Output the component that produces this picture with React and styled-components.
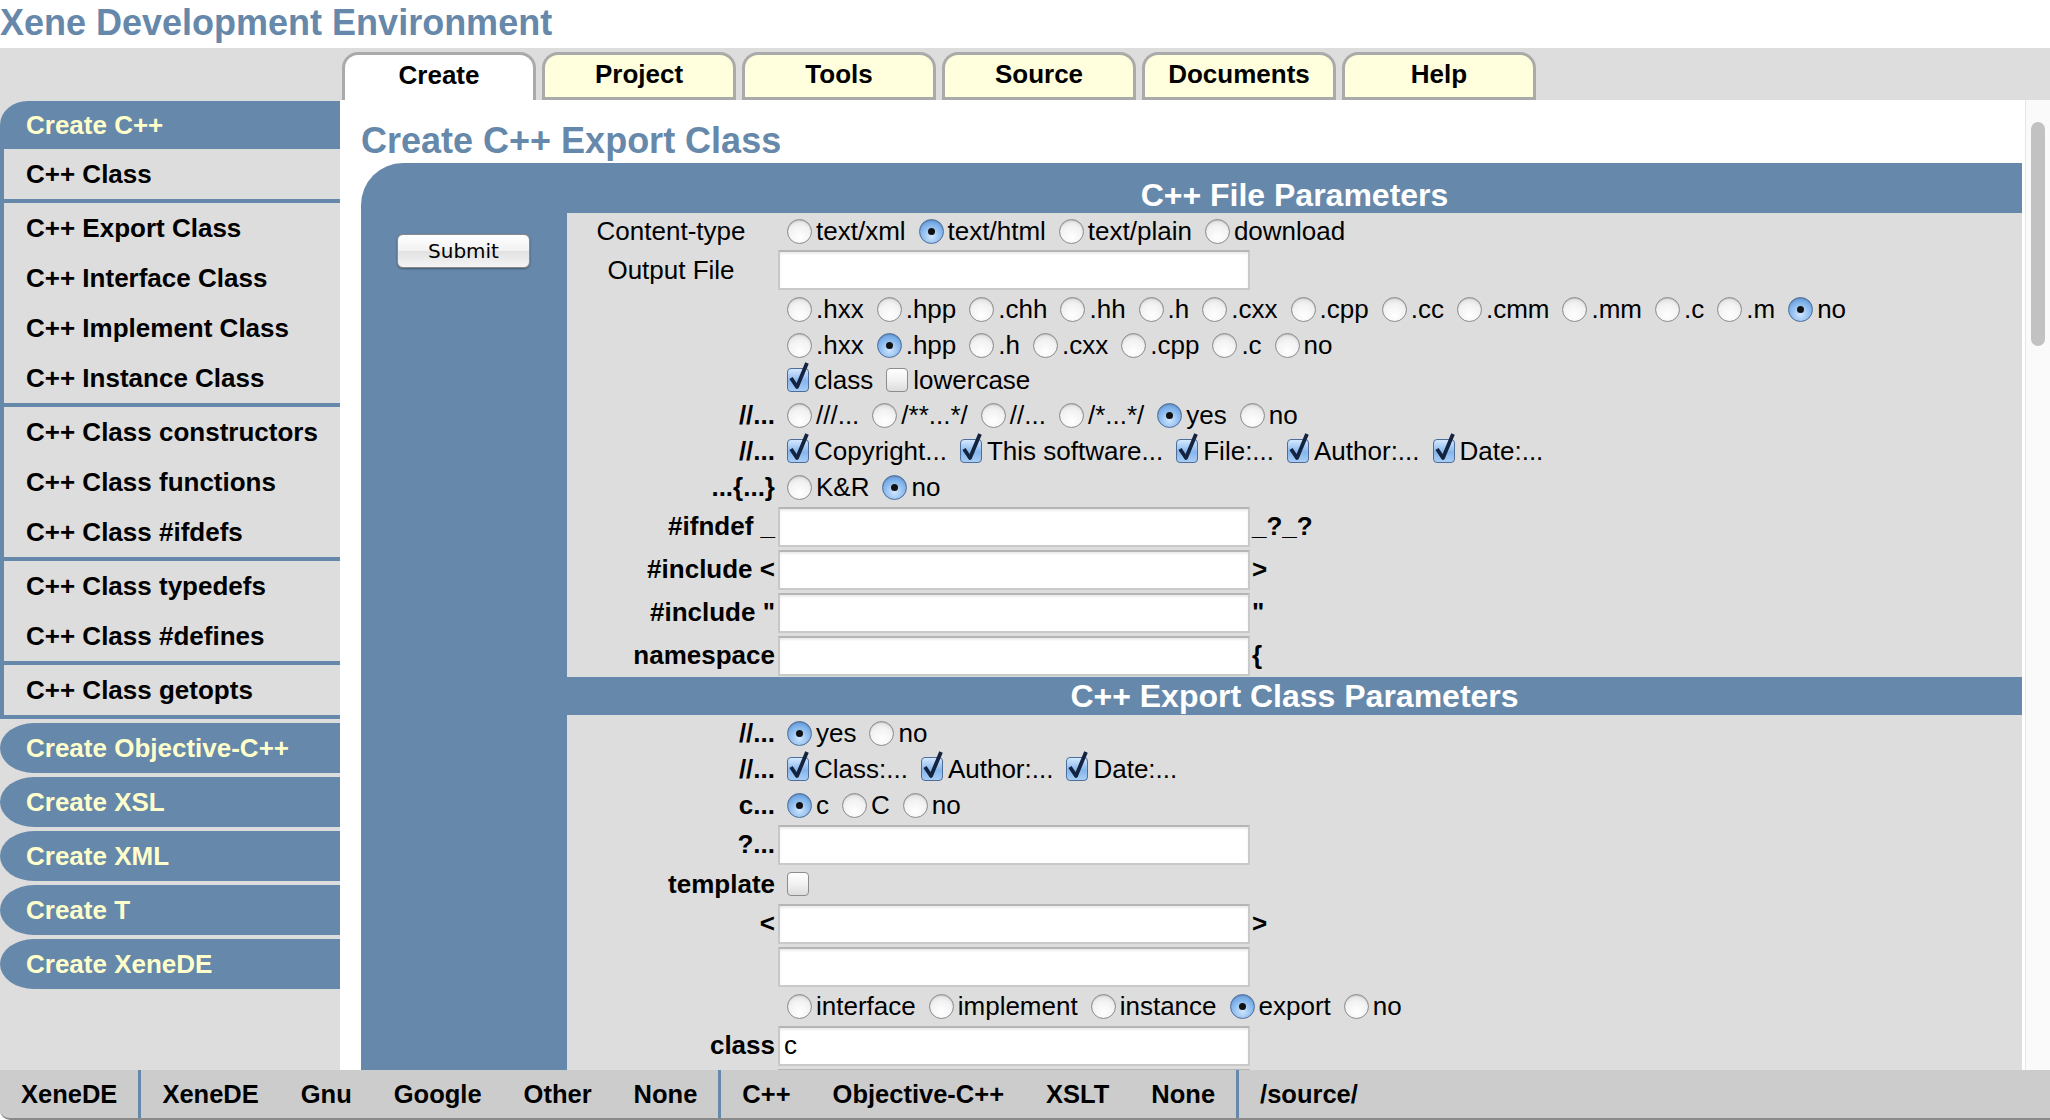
import styled, { createGlobalStyle } from "styled-components";

const BLUE = "#6688aa";

const GlobalStyle = createGlobalStyle`
  * { box-sizing: border-box; }
  body {
    margin: 0;
    background: #fff;
    font-family: "Liberation Sans", Arial, sans-serif;
    color: #000;
  }
`;

const tabs = ["Create", "Project", "Tools", "Source", "Documents", "Help"];

const groups = [
  ["C++ Class"],
  ["C++ Export Class", "C++ Interface Class", "C++ Implement Class", "C++ Instance Class"],
  ["C++ Class constructors", "C++ Class functions", "C++ Class #ifdefs"],
  ["C++ Class typedefs", "C++ Class #defines"],
  ["C++ Class getopts"],
];

const moreCreate = [
  "Create Objective-C++",
  "Create XSL",
  "Create XML",
  "Create T",
  "Create XeneDE",
];

const footer = [
  ["XeneDE"],
  ["XeneDE", "Gnu", "Google", "Other", "None"],
  ["C++", "Objective-C++", "XSLT", "None"],
  ["/source/"],
];

const Radio = ({ on }) => <RadioDot $on={on} />;

const Check = ({ on }) => (
  <CheckBox $on={on}>
    {on && (
      <svg width="24" height="30" viewBox="0 0 24 30">
        <path
          d="M4 17 L10 26 L20 2"
          fill="none"
          stroke="#14233f"
          strokeWidth="3.8"
          strokeLinejoin="round"
        />
      </svg>
    )}
  </CheckBox>
);

const Options = ({ items, type = "radio" }) =>
  items.map(([text, on], i) => (
    <Option key={i} $check={type !== "radio"}>
      {type === "radio" ? <Radio on={on} /> : <Check on={on} />}
      {text && <span>{text}</span>}
    </Option>
  ));

const App = () => {
  return (
    <Page>
      <GlobalStyle />
      <Title>Xene Development Environment</Title>
      <TabBar>
        {tabs.map((t, i) => (
          <Tab key={t} $active={i === 0}>
            {t}
          </Tab>
        ))}
      </TabBar>
      <Body>
        <Sidebar>
          <SideHead>Create C++</SideHead>
          {groups.map((g, i) => (
            <Group key={i}>
              {g.map((item) => (
                <SideItem key={item}>{item}</SideItem>
              ))}
            </Group>
          ))}
          {moreCreate.map((c) => (
            <SideHead key={c} $pill>
              {c}
            </SideHead>
          ))}
        </Sidebar>
        <Content>
          <Main>
            <Heading>Create C++ Export Class</Heading>
            <Panel>
              <SubmitCol>
                <SubmitButton>Submit</SubmitButton>
              </SubmitCol>
              <FormCol>
                <SectionHead $h={50} $top={14}>
                  C++ File Parameters
                </SectionHead>
                <Section>
                  <Row $h={36}>
                    <Label $plain>Content-type</Label>
                    <Value $pl={9}>
                      <Options
                        items={[
                          ["text/xml"],
                          ["text/html", true],
                          ["text/plain"],
                          ["download"],
                        ]}
                      />
                    </Value>
                  </Row>
                  <Row $h={42}>
                    <Label $plain>Output File</Label>
                    <Value>
                      <Field />
                    </Value>
                  </Row>
                  <Row $h={36}>
                    <Label />
                    <Value $pl={9}>
                      <Options
                        items={[
                          [".hxx"],
                          [".hpp"],
                          [".chh"],
                          [".hh"],
                          [".h"],
                          [".cxx"],
                          [".cpp"],
                          [".cc"],
                          [".cmm"],
                          [".mm"],
                          [".c"],
                          [".m"],
                          ["no", true],
                        ]}
                      />
                    </Value>
                  </Row>
                  <Row $h={36}>
                    <Label />
                    <Value $pl={9}>
                      <Options
                        items={[
                          [".hxx"],
                          [".hpp", true],
                          [".h"],
                          [".cxx"],
                          [".cpp"],
                          [".c"],
                          ["no"],
                        ]}
                      />
                    </Value>
                  </Row>
                  <Row $h={34}>
                    <Label />
                    <Value $pl={9}>
                      <Options type="check" items={[["class", true], ["lowercase"]]} />
                    </Value>
                  </Row>
                  <Row $h={36}>
                    <Label>//...</Label>
                    <Value $pl={9}>
                      <Options
                        items={[
                          ["///..."],
                          ["/**...*/"],
                          ["//..."],
                          ["/*...*/"],
                          ["yes", true],
                          ["no"],
                        ]}
                      />
                    </Value>
                  </Row>
                  <Row $h={36}>
                    <Label>//...</Label>
                    <Value $pl={9}>
                      <Options
                        type="check"
                        items={[
                          ["Copyright...", true],
                          ["This software...", true],
                          ["File:...", true],
                          ["Author:...", true],
                          ["Date:...", true],
                        ]}
                      />
                    </Value>
                  </Row>
                  <Row $h={36}>
                    <Label>...{"{...}"}</Label>
                    <Value $pl={9}>
                      <Options items={[["K&R"], ["no", true]]} />
                    </Value>
                  </Row>
                  <Row $h={43}>
                    <Label>#ifndef _</Label>
                    <Value>
                      <Field />
                      <Suffix>_?_?</Suffix>
                    </Value>
                  </Row>
                  <Row $h={43}>
                    <Label>#include &lt;</Label>
                    <Value>
                      <Field />
                      <Suffix>&gt;</Suffix>
                    </Value>
                  </Row>
                  <Row $h={43}>
                    <Label>#include "</Label>
                    <Value>
                      <Field />
                      <Suffix>"</Suffix>
                    </Value>
                  </Row>
                  <Row $h={43}>
                    <Label>namespace</Label>
                    <Value>
                      <Field />
                      <Suffix>{"{"}</Suffix>
                    </Value>
                  </Row>
                </Section>
                <SectionHead $h={38}>C++ Export Class Parameters</SectionHead>
                <Section>
                  <Row $h={36}>
                    <Label>//...</Label>
                    <Value $pl={9}>
                      <Options items={[["yes", true], ["no"]]} />
                    </Value>
                  </Row>
                  <Row $h={36}>
                    <Label>//...</Label>
                    <Value $pl={9}>
                      <Options
                        type="check"
                        items={[
                          ["Class:...", true],
                          ["Author:...", true],
                          ["Date:...", true],
                        ]}
                      />
                    </Value>
                  </Row>
                  <Row $h={36}>
                    <Label>c...</Label>
                    <Value $pl={9}>
                      <Options items={[["c", true], ["C"], ["no"]]} />
                    </Value>
                  </Row>
                  <Row $h={43}>
                    <Label>?...</Label>
                    <Value>
                      <Field />
                    </Value>
                  </Row>
                  <Row $h={36}>
                    <Label>template</Label>
                    <Value $pl={9}>
                      <Options type="check" items={[[""]]} />
                    </Value>
                  </Row>
                  <Row $h={43}>
                    <Label>&lt;</Label>
                    <Value>
                      <Field />
                      <Suffix>&gt;</Suffix>
                    </Value>
                  </Row>
                  <Row $h={43}>
                    <Label />
                    <Value>
                      <Field />
                    </Value>
                  </Row>
                  <Row $h={36}>
                    <Label />
                    <Value $pl={9}>
                      <Options
                        items={[
                          ["interface"],
                          ["implement"],
                          ["instance"],
                          ["export", true],
                          ["no"],
                        ]}
                      />
                    </Value>
                  </Row>
                  <Row $h={43}>
                    <Label>class</Label>
                    <Value>
                      <Field defaultValue="c" />
                    </Value>
                  </Row>
                  <Row $h={43}>
                    <Label />
                    <Value>
                      <Field />
                    </Value>
                  </Row>
                </Section>
              </FormCol>
            </Panel>
          </Main>
          <Track>
            <Thumb />
          </Track>
        </Content>
      </Body>
      <Footer>
        {footer.map((grp, i) => (
          <FootGroup key={i} $sep={i > 0}>
            {grp.map((f, j) => (
              <FootItem key={j}>{f}</FootItem>
            ))}
          </FootGroup>
        ))}
      </Footer>
    </Page>
  );
};
export default App;

const Page = styled.div`
  width: 2050px;
  height: 1120px;
  display: flex;
  flex-direction: column;
  overflow: hidden;
`;

const Title = styled.h1`
  margin: 0;
  height: 48px;
  font-size: 36px;
  line-height: 46px;
  font-weight: bold;
  color: ${BLUE};
  white-space: nowrap;
`;

const TabBar = styled.div`
  height: 52px;
  flex-shrink: 0;
  background: #dddddd;
  display: flex;
  align-items: flex-end;
  gap: 6px;
  padding-left: 342px;
`;

const Tab = styled.div`
  width: 194px;
  height: 48px;
  border: 3px solid #aaaaaa;
  border-bottom: ${(p) => (p.$active ? "none" : "3px solid #aaaaaa")};
  border-radius: 16px 16px 0 0;
  background: ${(p) => (p.$active ? "#ffffff" : "#ffffdd")};
  display: flex;
  align-items: center;
  justify-content: center;
  padding-bottom: 4px;
  font-size: 26px;
  font-weight: bold;
`;

const Body = styled.div`
  display: flex;
  height: 970px;
  flex-shrink: 0;
`;

const Sidebar = styled.div`
  width: 340px;
  flex-shrink: 0;
  background: #dddddd;
  display: flex;
  flex-direction: column;
  padding-top: 1px;
`;

const SideHead = styled.div`
  height: ${(p) => (p.$pill ? "50px" : "48px")};
  margin-top: ${(p) => (p.$pill ? "4px" : "0")};
  background: ${BLUE};
  color: #ffffcc;
  font-size: 26px;
  font-weight: bold;
  display: flex;
  align-items: center;
  padding-left: 26px;
  white-space: nowrap;
  border-radius: ${(p) =>
    p.$pill ? "34px 0 0 34px / 25px 0 0 25px" : "28px 0 0 0 / 24px 0 0 0"};
`;

const Group = styled.div`
  border-left: 4px solid ${BLUE};
  border-bottom: 4px solid ${BLUE};
`;

const SideItem = styled.div`
  height: 50px;
  display: flex;
  align-items: center;
  padding-left: 22px;
  font-size: 26px;
  font-weight: bold;
  white-space: nowrap;
`;

const Content = styled.div`
  flex: 1;
  min-width: 0;
  background: #ffffff;
  display: flex;
  overflow: hidden;
`;

const Main = styled.div`
  flex: 1;
  min-width: 0;
  padding: 0 3px 0 21px;
`;

const Heading = styled.h2`
  margin: 0;
  height: 63px;
  padding-top: 19px;
  font-size: 36px;
  line-height: 44px;
  font-weight: bold;
  color: ${BLUE};
  white-space: nowrap;
`;

const Panel = styled.div`
  background: ${BLUE};
  border-top-left-radius: 42px;
  display: flex;
  min-height: 960px;
`;

const SubmitCol = styled.div`
  width: 206px;
  flex-shrink: 0;
  padding: 71px 0 0 36px;
`;

const SubmitButton = styled.button`
  width: 133px;
  height: 34px;
  border: 1px solid #8a8a8a;
  border-radius: 6px;
  background: linear-gradient(#ffffff, #f1f1f1 50%, #e2e2e2 51%, #f4f4f4);
  box-shadow: 0 1px 2px rgba(0, 0, 0, 0.35);
  font-family: "DejaVu Sans", sans-serif;
  font-size: 20px;
  color: #000;
  padding: 0;
`;

const FormCol = styled.div`
  flex: 1;
  min-width: 0;
`;

const SectionHead = styled.div`
  height: ${(p) => p.$h}px;
  padding-top: ${(p) => p.$top || 0}px;
  display: flex;
  align-items: center;
  justify-content: center;
  color: #ffffff;
  font-size: 32px;
  font-weight: bold;
  white-space: nowrap;
`;

const Section = styled.div`
  background: #dddddd;
`;

const Row = styled.div`
  height: ${(p) => p.$h}px;
  display: flex;
  align-items: center;
`;

const Label = styled.div`
  width: 211px;
  flex-shrink: 0;
  padding-right: 3px;
  text-align: ${(p) => (p.$plain ? "center" : "right")};
  font-weight: ${(p) => (p.$plain ? "normal" : "bold")};
  font-size: 26px;
  white-space: nowrap;
`;

const Value = styled.div`
  display: flex;
  align-items: center;
  gap: 13px;
  padding-left: ${(p) => p.$pl || 0}px;
  font-size: 26px;
  white-space: nowrap;
`;

const Option = styled.span`
  display: inline-flex;
  align-items: center;
  gap: ${(p) => (p.$check ? "5px" : "4px")};
`;

const RadioDot = styled.span`
  position: relative;
  width: 25px;
  height: 25px;
  border-radius: 50%;
  flex-shrink: 0;
  border: 1px solid ${(p) => (p.$on ? "#4d6d9a" : "#8c8c8c")};
  background: ${(p) =>
    p.$on
      ? "radial-gradient(circle at 50% 70%, #cfe6ff, #7fb2ea 60%, #5b8fd0)"
      : "radial-gradient(circle at 50% 75%, #ffffff, #f2f2f2 55%, #d4d4d4)"};
  box-shadow: inset 0 1px 1px rgba(0, 0, 0, 0.15);
  &::after {
    content: "";
    display: ${(p) => (p.$on ? "block" : "none")};
    position: absolute;
    width: 7px;
    height: 7px;
    border-radius: 50%;
    background: #111;
    left: 8px;
    top: 8px;
  }
`;

const CheckBox = styled.span`
  position: relative;
  width: 22px;
  height: 24px;
  flex-shrink: 0;
  border-radius: 4px;
  border: 1px solid ${(p) => (p.$on ? "#4d6d9a" : "#8c8c8c")};
  background: ${(p) =>
    p.$on
      ? "linear-gradient(#d5e8ff, #86b6ec 55%, #a9cdf5)"
      : "linear-gradient(#ffffff, #f0f0f0 55%, #dcdcdc)"};
  svg {
    position: absolute;
    left: -1px;
    top: -8px;
  }
`;

const Field = styled.input`
  width: 472px;
  height: 40px;
  border: 2px solid #c9c9c9;
  border-top-color: #b5b5b5;
  box-shadow: inset 0 2px 2px rgba(0, 0, 0, 0.08);
  background: #ffffff;
  font-family: "Liberation Sans", Arial, sans-serif;
  font-size: 26px;
  padding: 0 4px;
  outline: none;
`;

const Suffix = styled.span`
  font-weight: bold;
  margin-left: -11px;
`;

const Track = styled.div`
  width: 25px;
  flex-shrink: 0;
  border-left: 1px solid #e6e6e6;
  background: #fafafa;
  padding-top: 22px;
`;

const Thumb = styled.div`
  width: 14px;
  height: 224px;
  margin: 0 auto;
  border-radius: 7px;
  background: #c2c2c2;
`;

const Footer = styled.div`
  height: 50px;
  flex-shrink: 0;
  background: #cccccc;
  border-bottom: 2px solid #8a8a8a;
  border-bottom-left-radius: 10px;
  display: flex;
`;

const FootGroup = styled.div`
  display: flex;
  align-items: center;
  border-left: ${(p) => (p.$sep ? `3px solid ${BLUE}` : "none")};
`;

const FootItem = styled.span`
  padding: 0 21px;
  font-size: 25.5px;
  font-weight: bold;
  white-space: nowrap;
`;
